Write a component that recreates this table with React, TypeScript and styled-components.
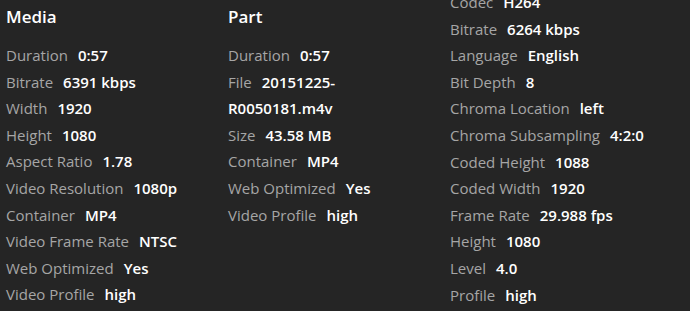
import styled, { createGlobalStyle } from 'styled-components'

const GlobalStyle = createGlobalStyle`
  html, body {
    margin: 0;
    padding: 0;
    background-color: #252525;
    overflow: hidden;
  }
  body {
    font-family: "Open Sans", "Noto Sans", sans-serif;
  }
`

const InfoContainer = styled.div`
  display: grid;
  grid-template-columns: 222px 222px 1fr;
  padding-left: 6px;
  height: 311px;
  overflow: hidden;
`

const Column = styled.div<{ $offset?: number }>`
  margin-top: ${(p) => p.$offset ?? 0}px;
  padding-right: 18px;
`

const ColumnTitle = styled.h2`
  margin: 0 0 9px 0;
  font-size: 17px;
  font-weight: 600;
  line-height: 33px;
  color: white;
`

const InfoRow = styled.div`
  font-size: 15px;
  line-height: 26.6px;
  color: white;
`

const InfoLabel = styled.span`
  color: #a6a6a6;
  margin-right: 10px;
`

const InfoValue = styled.span`
  font-weight: 600;
`

type Field = [string, string]

const media: Field[] = [
  ['Duration', '0:57'],
  ['Bitrate', '6391 kbps'],
  ['Width', '1920'],
  ['Height', '1080'],
  ['Aspect Ratio', '1.78'],
  ['Video Resolution', '1080p'],
  ['Container', 'MP4'],
  ['Video Frame Rate', 'NTSC'],
  ['Web Optimized', 'Yes'],
  ['Video Profile', 'high'],
]

const part: Field[] = [
  ['Duration', '0:57'],
  ['File', '20151225-R0050181.m4v'],
  ['Size', '43.58 MB'],
  ['Container', 'MP4'],
  ['Web Optimized', 'Yes'],
  ['Video Profile', 'high'],
]

const video: Field[] = [
  ['Codec', 'H264'],
  ['Bitrate', '6264 kbps'],
  ['Language', 'English'],
  ['Bit Depth', '8'],
  ['Chroma Location', 'left'],
  ['Chroma Subsampling', '4:2:0'],
  ['Coded Height', '1088'],
  ['Coded Width', '1920'],
  ['Frame Rate', '29.988 fps'],
  ['Height', '1080'],
  ['Level', '4.0'],
  ['Profile', 'high'],
]

function InfoList(props: { fields: Field[] }) {
  return (
    <>
      {props.fields.map(([label, value]) => (
        <InfoRow key={label}>
          <InfoLabel>{label}</InfoLabel>
          <InfoValue>{value}</InfoValue>
        </InfoRow>
      ))}
    </>
  )
}

export default function App() {
  return (
    <InfoContainer>
      <GlobalStyle />
      <Column>
        <ColumnTitle>Media</ColumnTitle>
        <InfoList fields={media} />
      </Column>
      <Column>
        <ColumnTitle>Part</ColumnTitle>
        <InfoList fields={part} />
      </Column>
      <Column $offset={-11}>
        <InfoList fields={video} />
      </Column>
    </InfoContainer>
  )
}
